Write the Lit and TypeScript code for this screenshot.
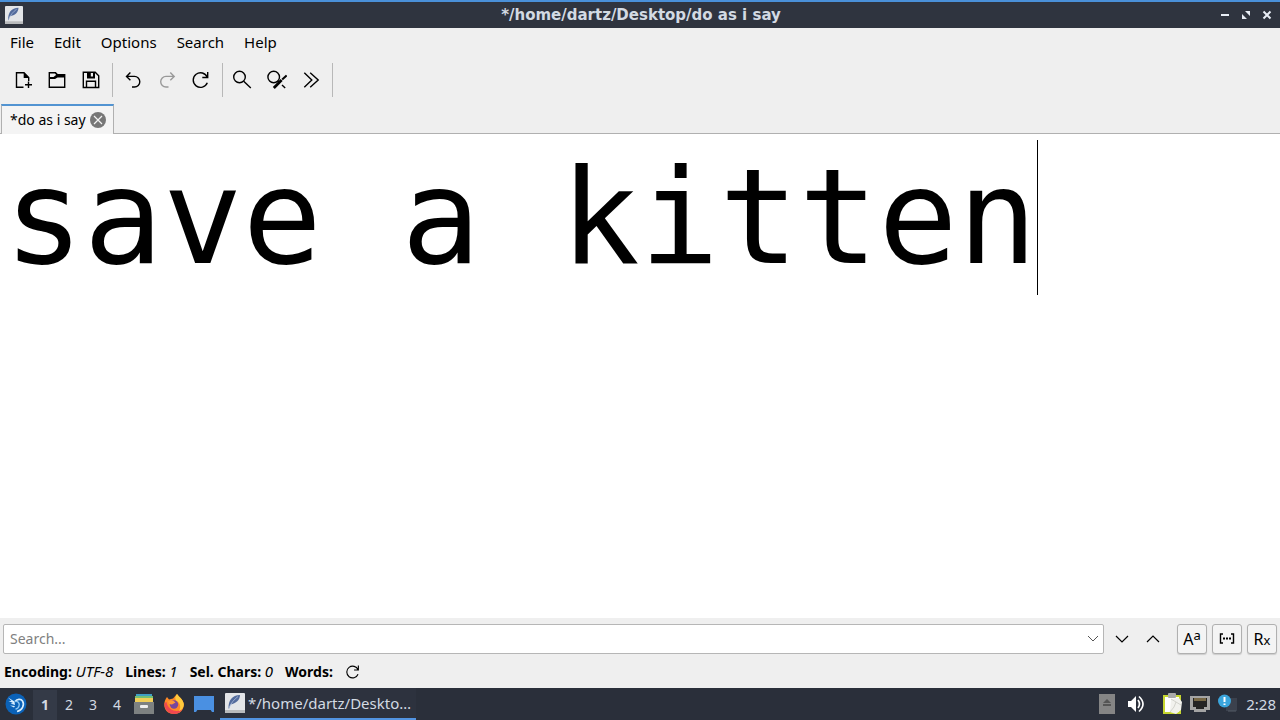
import { LitElement, html, css, svg } from "lit";
import { customElement, state } from "lit/decorators.js";
import { styleMap } from "lit/directives/style-map.js";

const stroke = (body: unknown, size = 20) => html`<svg class="line" width=${size} height=${size} viewBox="0 0 20 20" aria-hidden="true">${body}</svg>`;

const newIcon = svg`<path d="M10.5 17.3H3.5V2.8H11L15.7 7.5V11"/><path d="M10.7 2.5V8H16.1Z" fill="currentColor" stroke="none"/><path d="M15.5 11.5V18M12 14.8H19"/>`;
const openIcon = svg`<path d="M2.3 17.2V2.8H8.5L10.5 4.8H17.7V17.2Z"/><path d="M2.5 9H8L10.5 7.4H17.5V4.2H10L8.5 2.5H8L9 5L6.5 7H2.5Z" fill="currentColor" stroke="none"/>`;
const saveIcon = svg`<path d="M2.3 2.3H14.2L17.7 5.8V17.5H2.3Z"/><path d="M5.5 17V11.2H14.5V17"/><path d="M6 2V8.5H14V3L12 2V6.5H9.8V2Z" fill="currentColor" stroke="none"/>`;
const undoIcon = svg`<path d="M7.4 2.5L3.5 6.4L7.4 10.3M3.7 6.4H11.5A5.3 5.3 0 0 1 11.5 17H9"/>`;
const redoIcon = svg`<path d="M13.3 2.5L17.2 6.4L13.3 10.3M17 6.4H9A5.3 5.3 0 0 0 9 17H11.5"/>`;
const reloadIcon = svg`<path d="M16.7 2V7.5H11.3M16.3 7.3A7.3 7.3 0 1 0 16.3 12.8"/>`;
const findIcon = svg`<circle cx="7.5" cy="7" r="5.8"/><path d="M11.7 11.2L18.8 18"/>`;
const replaceIcon = svg`<circle cx="6.7" cy="7" r="5.8"/><path d="M10.5 11L12.5 13M15 15L18.2 18"/><path d="M6.8 18L14.6 10" stroke-width="2.8"/><path d="M15.2 9.4L19.6 5.4" stroke-width="2"/>`;
const jumpIcon = svg`<path d="M2.3 2.8L9.8 10L2.3 17.2M8.2 2.8L16.2 10L8.2 17.2"/>`;

const feather = (size: number) => html`<svg width=${size} height=${size} viewBox="0 0 20 20" aria-hidden="true">
  <rect width="20" height="20" rx="1" fill="#e3e5e8"/><rect y="17" width="20" height="3" fill="#b9bbbd"/>
  <path d="M3.5 15C3.5 7 7 2.5 15 2C15 7 11 10.5 5.5 11.5C4.8 13 4.5 14 4 16Z" fill="#536b9c"/>
  <path d="M4 15C6 10 9 6.5 13 3.5" fill="none" stroke="#a9bbdc" stroke-width=".8"/></svg>`;

@customElement("app-root")
export class AppRoot extends LitElement {
  @state() private text = "save a kitten";

  static styles = css`
    :host { display: flex; flex-direction: column; min-height: 100vh; background: #efefef; color: #000; font: 15px/20px "Noto Sans", sans-serif; }
    *, *::before { box-sizing: border-box; }
    svg { display: block; flex: none; }
    .line { fill: none; stroke: currentColor; stroke-width: 1.4; }
    button { display: flex; align-items: center; justify-content: center; margin: 0; padding: 0; border: 0; background: none; color: inherit; font: inherit; }
    .titlebar { display: grid; grid-template-columns: 1fr auto 1fr; align-items: center; height: 28px; padding: 0 3px 0 5px; border-top: 2px solid #4a90d9; background: #2f343f; color: #d3dae3; }
    .titlebar h1 { margin: 0; font: bold 15px/20px "DejaVu Sans", sans-serif; }
    .window-controls { display: flex; justify-content: flex-end; }
    .window-controls button { width: 21px; height: 24px; }
    .menu { display: flex; gap: 20px; height: 30px; padding: 0 10px 2px; align-items: center; }
    .toolbar { display: flex; align-items: center; height: 46px; padding: 0 0 2px 6px; }
    .group { display: flex; height: 34px; padding-right: 4px; border-right: 1px solid #b8b8b8; }
    .group button { width: 34px; }
    .group + .group { padding-left: 3px; }
    .group.wide { padding-right: 3px; }
    .group + .group.wide { padding-left: 1px; }
    .group.wide button { width: 35px; }
    .group .disabled { color: #999; }
    .tabs { display: flex; height: 30px; padding-left: 1px; border-bottom: 1px solid #b0b0b0; font-size: 14px; }
    .tab { gap: 4px; height: 30px; padding: 0 7px 0 8px; border: 1px solid #b0b0b0; border-top: 2px solid #5294d2; border-bottom: 0; background: #f4f4f4; }
    .editor { position: relative; display: flex; flex: 1; background: #fff; font: 132px/154px "DejaVu Sans Mono", monospace; }
    .editor textarea { flex: 1; min-width: 0; padding: 6px 4px; border: 0; outline: 0; resize: none; background: none; color: #000; font: inherit; overflow: hidden; }
    .caret { position: absolute; top: 6px; width: 1px; height: 155px; background: #000; pointer-events: none; }
    .search { display: flex; align-items: center; height: 40px; padding: 2px 3px 0; gap: 5px; font-size: 14px; }
    .field { display: flex; flex: 1; height: 30px; border: 1px solid #b6b6b6; border-radius: 2px; background: #fff; color: #555; }
    .field input { flex: 1; min-width: 0; padding: 0 6px; border: 0; outline: 0; background: none; font: inherit; }
    .field input::placeholder { color: #808080; opacity: 1; }
    .field button { width: 20px; }
    .steps { display: flex; padding-right: 4px; margin-left: -3px; }
    .steps button { width: 31px; height: 30px; }
    .toggle { width: 30px; height: 30px; border: 1px solid #b0b0b0; border-radius: 3px; background: #f4f4f4; box-shadow: 0 1px 1px #ccc; font-size: 16px; }
    .toggle sup { font-size: 13px; line-height: 10px; margin-bottom: 9px; }
    .toggle small { font-size: 13px; margin-top: 2px; }
    .status { display: flex; align-items: center; gap: 12px; height: 30px; padding: 0 4px 2px; font-size: 14px; }
    .status em { font-weight: normal; font-size: 15px; line-height: 16px; }
    .taskbar { display: flex; align-items: center; height: 32px; background: #2a2f3a; color: #d3dae3; }
    .start { width: 32px; height: 32px; }
    .desks { display: flex; height: 32px; padding: 2px 0 0 1px; font-size: 14px; }
    .desks button { width: 24px; }
    .desks .current { background: #343a47; font-weight: bold; }
    .launchers { display: flex; width: 91px; padding-left: 5px; gap: 10px; }
    .task { justify-content: flex-start; gap: 3px; width: 196px; height: 32px; border-bottom: 2px solid #5294e2; padding: 0 0 0 5px; background: #2d323e; white-space: nowrap; }
    .tray { display: flex; align-items: center; margin-left: auto; padding-right: 4px; }
    .tray svg { margin-right: 8px; }
    .tray .sound { margin: 0 17px 0 4px; }
  `;

  private onInput(e: Event) { this.text = (e.target as HTMLTextAreaElement).value; }

  render() {
    const lines = this.text.split("\n");
    const caret = { left: `calc(4px + ${lines[lines.length - 1].length}ch)` };
    const tool = (label: string, icon: unknown, off = false) => html`<button class=${off ? "disabled" : ""} ?disabled=${off} aria-label=${label}>${stroke(icon)}</button>`;
    return html`
      <header class="titlebar">
        ${feather(18)}
        <h1>*/home/dartz/Desktop/do as i say</h1>
        <div class="window-controls">
          <button aria-label="Minimize"><svg width="10" height="10"><path d="M1 5H9" stroke="#e8edf5" stroke-width="2"/></svg></button>
          <button aria-label="Restore"><svg width="10" height="10" fill="#e8edf5"><path d="M4 1H9V6ZM1 4V9H6Z"/></svg></button>
          <button aria-label="Close"><svg width="10" height="10"><path d="M1.5 1.5L8.5 8.5M8.5 1.5L1.5 8.5" stroke="#e8edf5" stroke-width="2"/></svg></button>
        </div>
      </header>
      <nav class="menu">${["File", "Edit", "Options", "Search", "Help"].map((m) => html`<button>${m}</button>`)}</nav>
      <div class="toolbar" role="toolbar">
        <div class="group">${tool("New", newIcon)}${tool("Open", openIcon)}${tool("Save", saveIcon)}</div>
        <div class="group">${tool("Undo", undoIcon)}${tool("Redo", redoIcon, true)}${tool("Reload", reloadIcon)}</div>
        <div class="group wide">${tool("Find", findIcon)}${tool("Replace", replaceIcon)}${tool("Jump", jumpIcon)}</div>
      </div>
      <div class="tabs"><button class="tab">*do as i say
        <svg width="16" height="16"><circle cx="8" cy="8" r="8" fill="#777"/><path d="M4 4L12 12M12 4L4 12" stroke="#f4f4f4" stroke-width="1.2"/></svg></button></div>
      <main class="editor">
        <textarea aria-label="Document" spellcheck="false" .value=${this.text} @input=${this.onInput}></textarea>
        <span class="caret" style=${styleMap(caret)}></span>
      </main>
      <div class="search">
        <div class="field"><input type="text" aria-label="Search" placeholder="Search..."><button aria-label="History"><svg class="line" width="12" height="8"><path d="M1 1L6 6L11 1" stroke-width="1"/></svg></button></div>
        <div class="steps">
          <button aria-label="Next"><svg class="line" width="14" height="8"><path d="M1 1L7 7L13 1" stroke-width="1.2"/></svg></button>
          <button aria-label="Previous"><svg class="line" width="14" height="8"><path d="M1 7L7 1L13 7" stroke-width="1.2"/></svg></button>
        </div>
        <button class="toggle" aria-label="Match case">A<sup>a</sup></button>
        <button class="toggle" aria-label="Whole word"><svg class="line" width="16" height="12"><path d="M4 1H1.5V10H4M12 1H14.5V10H12"/><path d="M4 5.5H12" stroke-width="2" stroke-dasharray="2 1"/></svg></button>
        <button class="toggle" aria-label="Regular expression">R<small>x</small></button>
      </div>
      <div class="status">
        <b>Encoding: <em>UTF-8</em></b><b>Lines: <em>${lines.length}</em></b><b>Sel. Chars: <em>0</em></b><b>Words:</b>
        <button aria-label="Count words">${stroke(reloadIcon, 16)}</button>
      </div>
      <footer class="taskbar">
        <button class="start" aria-label="Applications"><svg width="22" height="22"><circle cx="11" cy="11" r="10.5" fill="#0b62b8"/><path d="M3 4.5L9.5 8.5L10 12L5.5 10.5L8 10L3.5 8L6.5 8ZM5 12.5L10 13L9 14.5Z" fill="#d9efff"/><path d="M10 8.5C12 6 16 5.5 17.5 8C20 12 17 17.5 12 18.5" fill="none" stroke="#d9efff" stroke-width="1.6"/><path d="M10 8.5C13 8 15 10 14 13C13.5 14.5 12 16 10.5 16" fill="none" stroke="#8bc6f2" stroke-width="1.4"/></svg></button>
        <div class="desks">${[1, 2, 3, 4].map((n) => html`<button class=${n === 1 ? "current" : ""}>${n}</button>`)}</div>
        <div class="launchers">
          <svg width="20" height="20"><rect x="2" width="16" height="4" fill="#3f9fc4"/><rect x="1" y="2" width="18" height="4" fill="#74bf73"/><rect x="1" y="4" width="18" height="4" fill="#f0cd58"/><path d="M0 8H20V20H0Z" fill="#7d8181"/><rect x="6" y="11" width="8" height="3" rx="1" fill="#eee"/></svg>
          <svg width="20" height="20"><path d="M3 3L5 5.5L9 4.5L13 0C15 3 19 5 19.8 10C20 16 16 20 10 20C4 20 0 16 .3 10C.5 7 1.5 5 3 3Z" fill="#ff8a26"/><path d="M.5 9C0 16 5 20 10 20C14 20 17 18 18.5 15C14 19 4 17 2.5 8Z" fill="#f04850"/><path d="M13 0C15 3 19 5 19.8 10C20 13 18 16 15 17C18 12 15 8 12.5 7C10.5 5 11 2 13 0Z" fill="#ffcb3d"/><circle cx="10" cy="10.5" r="4.2" fill="#77469d"/><path d="M4 7L9 6.5L11.5 8.5L8 10.5L5 10Z" fill="#ff9838"/></svg>
          <svg width="20" height="20"><rect y="2" width="20" height="14" fill="#4a90e2"/><path d="M0 15H4L2 18H0ZM16 15H20V18H18Z" fill="#4a90e2"/></svg>
        </div>
        <button class="task">${feather(20)}<span>*/home/dartz/Deskto…</span></button>
        <div class="tray">
          <svg width="16" height="20"><rect width="16" height="20" fill="#858585"/><path d="M4 9L8 5L12 9ZM4 10H12V12H4Z" fill="#555"/></svg>
          <svg class="sound" width="18" height="18"><path d="M1 6H4L9 1V17L4 12H1Z" fill="#fff"/><path d="M11 5Q14 9 11 13M12 1.5Q20 9 12 16.5" fill="none" stroke="#fff" stroke-width="1.7"/></svg>
          <svg width="20" height="22"><rect x="2" y="3" width="16" height="17" fill="#fff" stroke="#c6d630" stroke-width="2"/><rect x="6" width="8" height="5" rx="1" fill="#aaa"/><path d="M9 6L17 5L20 9L19 17L14 21L8 19Z" fill="#f1f1ed"/><path d="M9 6L14 9L12 14L8 19M14 9L19 12" fill="none" stroke="#c5c5bf" stroke-width=".7"/></svg>
          <svg width="20" height="20"><path d="M0 2H20V16H16V18H4V16H0Z" fill="#a4a4a4"/><path d="M3 4H17V13H14V15H6V13H3Z" fill="#242424"/><path d="M5 4V7M7 4V7M9 4V7M11 4V7M13 4V7M15 4V7" stroke="#ccad69"/></svg>
          <svg width="20" height="20"><rect x="8" y="4" width="11" height="13" fill="#3b414d"/><path d="M10 17H18" stroke="#555c67"/><circle cx="6.5" cy="7" r="6.5" fill="#3ba5dc"/><path d="M6.5 3V8M6.5 9.5V11" stroke="#fff" stroke-width="2"/></svg>
          <time>2:28</time>
        </div>
      </footer>`;
  }
}
